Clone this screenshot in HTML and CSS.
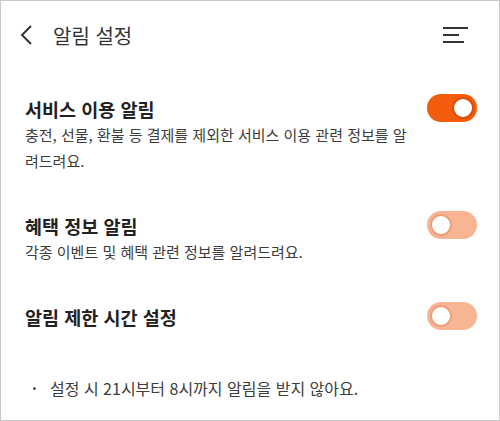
FILE: index.html
```html
<!DOCTYPE html>
<html lang="ko">
<head>
<meta charset="UTF-8">
<meta name="viewport" content="width=device-width, initial-scale=1.0">
<title>알림 설정</title>
<link rel="stylesheet" href="styles.css">
</head>
<body>
<div class="screen">
    <header class="topbar">
        <svg class="back" width="12" height="20" viewBox="0 0 12 20">
            <polyline points="11,1 2,10 11,19" fill="none" stroke="#333" stroke-width="2"/>
        </svg>
        <h1>알림 설정</h1>
        <svg class="menu" width="26" height="20" viewBox="0 0 26 20">
            <line x1="0" y1="3" x2="25" y2="3" stroke="#333" stroke-width="2"/>
            <line x1="0" y1="10" x2="16" y2="10" stroke="#333" stroke-width="2"/>
            <line x1="0" y1="17" x2="21" y2="17" stroke="#333" stroke-width="2"/>
        </svg>
    </header>

    <section class="setting first">
        <div class="setting-head">
            <h2>서비스 이용 알림</h2>
            <span class="switch on"><span class="knob"></span></span>
        </div>
        <p class="setting-desc">충전, 선물, 환불 등 결제를 제외한 서비스 이용 관련 정보를 알려드려요.</p>
    </section>

    <section class="setting">
        <div class="setting-head">
            <h2>혜택 정보 알림</h2>
            <span class="switch"><span class="knob"></span></span>
        </div>
        <p class="setting-desc">각종 이벤트 및 혜택 관련 정보를 알려드려요.</p>
    </section>

    <section class="setting">
        <div class="setting-head">
            <h2>알림 제한 시간 설정</h2>
            <span class="switch"><span class="knob"></span></span>
        </div>
    </section>

    <ul class="notes">
        <li>설정 시 21시부터 8시까지 알림을 받지 않아요.</li>
    </ul>
</div>
</body>
</html>
```

FILE: styles.css
```css
html, body {
    margin: 0;
    background-color: #fff;
}
.screen {
    width: 500px;
    height: 421px;
    box-sizing: border-box;
    border: 1px solid #c9c9c9;
    font-family: "Noto Sans CJK KR", "Noto Sans", sans-serif;
    color: #222;
    overflow: hidden;
}
.topbar {
    height: 68px;
    display: flex;
    align-items: center;
    padding: 0 30px 0 19px;
}
.topbar h1 {
    margin: 0 0 0 21px;
    font-size: 20px;
    font-weight: 400;
    color: #333;
    flex: 1;
}
.setting {
    padding: 0 22px 0 24px;
    margin-top: 37px;
}
.setting.first {
    margin-top: 25px;
}
.setting-head {
    display: flex;
    align-items: center;
    justify-content: space-between;
    height: 30px;
}
.setting-head h2 {
    margin: 0;
    font-size: 18.5px;
    font-weight: 700;
    line-height: 30px;
    color: #222;
}
.setting-desc {
    margin: -2px 0 0 0;
    max-width: 386px;
    font-size: 15px;
    line-height: 26px;
    color: #3d3d3d;
}
.switch {
    width: 50px;
    height: 28px;
    border-radius: 14px;
    background-color: #f8b593;
    display: flex;
    align-items: center;
    justify-content: flex-start;
    padding: 0 3px;
    box-sizing: border-box;
    margin-top: -2px;
}
.switch .knob {
    width: 22px;
    height: 22px;
    border-radius: 50%;
    background-color: #fff;
    border: 2px solid #eca07a;
    box-sizing: border-box;
}
.switch.on {
    background-color: #f25c0c;
    justify-content: flex-end;
}
.switch.on .knob {
    border-color: #d94f08;
}
.notes {
    list-style: none;
    margin: 45px 0 0 0;
    padding: 0 0 0 32px;
}
.notes li {
    position: relative;
    padding-left: 17px;
    font-size: 16px;
    line-height: 22px;
    color: #3d3d3d;
}
.notes li::before {
    content: "";
    position: absolute;
    left: 0;
    top: 10px;
    width: 3px;
    height: 3px;
    border-radius: 50%;
    background-color: #555;
}
```
